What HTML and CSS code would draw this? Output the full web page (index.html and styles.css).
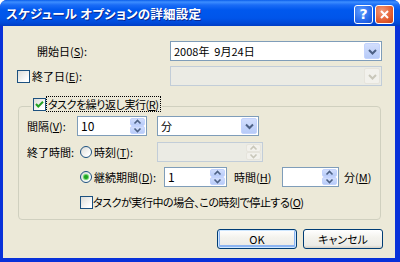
FILE: index.html
```html
<!DOCTYPE html>
<html lang="ja">
<head>
<meta charset="utf-8">
<title>スケジュール オプションの詳細設定</title>
<link rel="stylesheet" href="styles.css">
</head>
<body>
<div class="window">
  <div class="titlebar">
    <span class="title">スケジュール オプションの詳細設定</span>
    <div class="tb-btns">
      <span class="tb-btn help">?</span>
      <span class="tb-btn close"><svg width="19" height="19" viewBox="0 0 19 19"><path d="M6 6 L13 13 M13 6 L6 13" stroke="#fff" stroke-width="2" fill="none"/></svg></span>
    </div>
  </div>
  <div class="client">
    <div class="row r1">
      <span class="lbl lbl-start">開始日(<u>S</u>):</span>
      <div class="combo wide"><span class="val">2008年&nbsp;&nbsp;9月24日</span><span class="dd"><svg width="15" height="17" viewBox="0 0 15 17"><path d="M4 7 L7.5 10.5 L11 7" stroke="#4D6185" stroke-width="2" fill="none"/></svg></span></div>
    </div>
    <div class="row r2">
      <span class="chk"></span>
      <span class="lbl lbl-end">終了日(<u>E</u>):</span>
      <div class="combo wide disabled"><span class="val"></span><span class="dd"><svg width="15" height="17" viewBox="0 0 15 17"><path d="M4 7 L7.5 10.5 L11 7" stroke="#C9C7BA" stroke-width="2" fill="none"/></svg></span></div>
    </div>
    <fieldset class="group">
      <legend><span class="chk"><svg width="11" height="11" viewBox="0 0 11 11"><path d="M2 5 L4.3 7.5 L9 2.8" stroke="#21A121" stroke-width="2" fill="none"/></svg></span><span class="focus tight">タスクを繰り返し実行(<u>R</u>)</span></legend>
      <div class="grow ga">
        <span class="lbl w-int">間隔(<u>V</u>):</span>
        <div class="spin w70"><span class="val">10</span><span class="sb"><span class="up"><svg width="13" height="8" viewBox="0 0 13 8"><path d="M3.5 5.5 L6.5 2.5 L9.5 5.5" stroke="#4D6185" stroke-width="1.6" fill="none"/></svg></span><span class="dn"><svg width="13" height="8" viewBox="0 0 13 8"><path d="M3.5 2.5 L6.5 5.5 L9.5 2.5" stroke="#4D6185" stroke-width="1.6" fill="none"/></svg></span></span></div>
        <div class="combo w102"><span class="val">分</span><span class="dd"><svg width="15" height="17" viewBox="0 0 15 17"><path d="M4 6.5 L7.5 10 L11 6.5" stroke="#4D6185" stroke-width="2" fill="none"/></svg></span></div>
      </div>
      <div class="grow gb">
        <span class="lbl w-end">終了時間:</span>
        <span class="radio"></span>
        <span class="lbl w-t">時刻(<u>T</u>):</span>
        <div class="spin w106 disabled"><span class="val"></span><span class="sb"><span class="up"><svg width="13" height="8" viewBox="0 0 13 8"><path d="M3.5 5.5 L6.5 2.5 L9.5 5.5" stroke="#C9C7BA" stroke-width="1.6" fill="none"/></svg></span><span class="dn"><svg width="13" height="8" viewBox="0 0 13 8"><path d="M3.5 2.5 L6.5 5.5 L9.5 2.5" stroke="#C9C7BA" stroke-width="1.6" fill="none"/></svg></span></span></div>
      </div>
      <div class="grow gc">
        <span class="radio on"><span class="dot"></span></span>
        <span class="lbl w-d">継続期間(<u>D</u>):</span>
        <div class="spin w63"><span class="val">1</span><span class="sb"><span class="up"><svg width="13" height="8" viewBox="0 0 13 8"><path d="M3.5 5.5 L6.5 2.5 L9.5 5.5" stroke="#4D6185" stroke-width="1.6" fill="none"/></svg></span><span class="dn"><svg width="13" height="8" viewBox="0 0 13 8"><path d="M3.5 2.5 L6.5 5.5 L9.5 2.5" stroke="#4D6185" stroke-width="1.6" fill="none"/></svg></span></span></div>
        <span class="lbl w-h">時間(<u>H</u>)</span>
        <div class="spin w57"><span class="val"></span><span class="sb"><span class="up"><svg width="13" height="8" viewBox="0 0 13 8"><path d="M3.5 5.5 L6.5 2.5 L9.5 5.5" stroke="#4D6185" stroke-width="1.6" fill="none"/></svg></span><span class="dn"><svg width="13" height="8" viewBox="0 0 13 8"><path d="M3.5 2.5 L6.5 5.5 L9.5 2.5" stroke="#4D6185" stroke-width="1.6" fill="none"/></svg></span></span></div>
        <span class="lbl w-m">分(<u>M</u>)</span>
      </div>
      <div class="grow gd">
        <span class="chk"></span>
        <span class="lbl tight">タスクが実行中の場合、この時刻で停止する(<u>O</u>)</span>
      </div>
    </fieldset>
    <div class="buttons">
      <button class="btn default">OK</button>
      <button class="btn">キャンセル</button>
    </div>
  </div>
</div>
</body>
</html>
```

FILE: styles.css
```css
* { box-sizing: border-box; }
html, body { margin: 0; padding: 0; background: #ffffff; }
body {
  width: 400px; height: 262px; overflow: hidden;
  font-family: "Noto Sans CJK JP", "Noto Sans", sans-serif;
  font-size: 11px; color: #000;
  font-feature-settings: "palt";
}
u { text-decoration: underline; text-underline-offset: 1px; }
.window {
  width: 400px; height: 262px;
  display: flex; flex-direction: column;
  border-radius: 7px 7px 0 0;
  overflow: hidden;
  background: #0831D9;
}
.titlebar {
  height: 26px; flex: none;
  display: flex; align-items: center; justify-content: space-between;
  padding: 0 6px 0 6px;
  background: linear-gradient(#0A5DEA 0px, #3D8EFF 2px, #1A6CF6 5px, #0058EE 10px, #0055EA 18px, #0049D8 23px, #003DC4 26px);
}
.title {
  color: #fff; font-weight: bold; font-size: 12.5px;
  text-shadow: 1px 1px 0 #0A2890;
  letter-spacing: 0.2px;
}
.tb-btns { display: flex; gap: 2px; margin-top: 2px; }
.tb-btn {
  width: 19px; height: 19px; border: 1px solid #fff; border-radius: 3px;
  display: flex; align-items: center; justify-content: center;
  color: #fff; font-weight: bold; font-size: 14px; font-family: "DejaVu Sans", sans-serif;
}
.tb-btn svg { margin: -1px; }
.help { background: radial-gradient(circle at 35% 30%, #5A9BFF, #2364E8 70%, #1A4FC8); }
.close { background: radial-gradient(circle at 35% 30%, #F39A7A, #E25A2C 65%, #C2401A); }
.client {
  flex: 1;
  margin: 0 5px 4px 3px;
  background: #ECE9D8;
  padding: 15px 12px 0 14px;
}
.row { display: flex; align-items: center; height: 20px; }
.r2 { margin-top: 5px; }
.lbl { white-space: nowrap; flex: none; line-height: 14px; }
.tight { letter-spacing: -0.45px; }
.lbl-start { margin-left: 20px; width: 133px; }
.lbl-end { margin-left: 2px; width: 138px; }
.chk {
  width: 13px; height: 13px; flex: none;
  border: 1px solid #1C5180;
  background: linear-gradient(135deg, #DCDCD7, #FFFFFF 80%);
  display: inline-flex; align-items: center; justify-content: center;
}
.combo, .spin {
  height: 20px; border: 1px solid #7F9DB9; background: #fff;
  display: flex; align-items: stretch; flex: none;
}
.combo .val, .spin .val { flex: 1; padding-left: 3px; line-height: 18px; white-space: nowrap; }
.spin .val { font-size: 12px; }
.wide { width: 212px; }
.dd {
  width: 16px; margin: 1px; border-radius: 2px;
  background: linear-gradient(#D2DEFD, #B7CBF8);
  border: 1px solid #C3D3FD;
  display: flex; align-items: center; justify-content: center;
}
.dd svg { margin: -1px; }
.disabled { border-color: #C2CDD8; background: #EBEBE4; }
.disabled .dd { background: #F2F1EC; border-color: #E6E4DC; }
.group {
  margin: 10px 0 0 1px; width: 363px;
  border: 1px solid #D0D0BF; border-radius: 4px;
  padding: 0 8px 8px 8px; min-width: 0;
}
.group legend {
  display: flex; align-items: center;
  padding: 0 2px 4px 2px; margin-left: 4px;
  height: 20px;
}
.focus { outline: 1px dotted #000; outline-offset: 0; margin-left: 1px; padding: 0 1px; line-height: 14px; }
.grow { display: flex; align-items: center; height: 20px; }
.gb { margin-top: 6px; }
.gc { margin-top: 5px; padding-left: 53px; }
.gd { margin-top: 6px; height: 18px; padding-left: 53px; }
.w-int { width: 50px; }
.w-end { width: 53px; }
.w-t { width: 63px; margin-left: 2px; }
.w-d { width: 70px; margin-left: 2px; }
.w-h { width: 48px; margin-left: 7px; }
.w-m { margin-left: 5px; }
.w70 { width: 70px; margin-right: 10px; }
.w102 { width: 102px; }
.w106 { width: 106px; }
.w63 { width: 63px; }
.w57 { width: 57px; }
.sb { width: 15px; margin: 1px; display: flex; flex-direction: column; gap: 0; }
.sb .up, .sb .dn {
  flex: 1; display: flex; align-items: center; justify-content: center;
  background: linear-gradient(#D2DEFD, #B7CBF8);
  border: 1px solid #C3D3FD; border-radius: 2px;
}
.sb svg { margin: -2px; }
.disabled .sb .up, .disabled .sb .dn { background: #F2F1EC; border-color: #E6E4DC; }
.radio {
  width: 12px; height: 12px; border-radius: 50%; flex: none;
  border: 1px solid #1C5180;
  background: linear-gradient(135deg, #DCDCD7, #FFFFFF 80%);
  display: inline-flex; align-items: center; justify-content: center;
}
.radio .dot { width: 4px; height: 4px; border-radius: 50%; background: #21A121; box-shadow: 0 0 1px 1px #5BD35B; }
.gd .chk { margin-right: 0; }
.buttons { display: flex; justify-content: flex-end; gap: 6px; margin-top: 9px; }
.btn {
  width: 80px; height: 20px; padding: 0;
  border: 1px solid #003C74; border-radius: 3px;
  background: linear-gradient(#FFFFFF, #F4F3EE 40%, #ECEBE6 85%, #D6D0C5);
  font-family: "Noto Sans CJK JP", "Noto Sans", sans-serif;
  font-size: 11px; color: #000; line-height: 16px;
  font-feature-settings: "palt";
}
.btn.default { box-shadow: inset 0 0 0 1px #CEE7FF, inset 0 -1px 0 2px #8CB4F2; }
```
